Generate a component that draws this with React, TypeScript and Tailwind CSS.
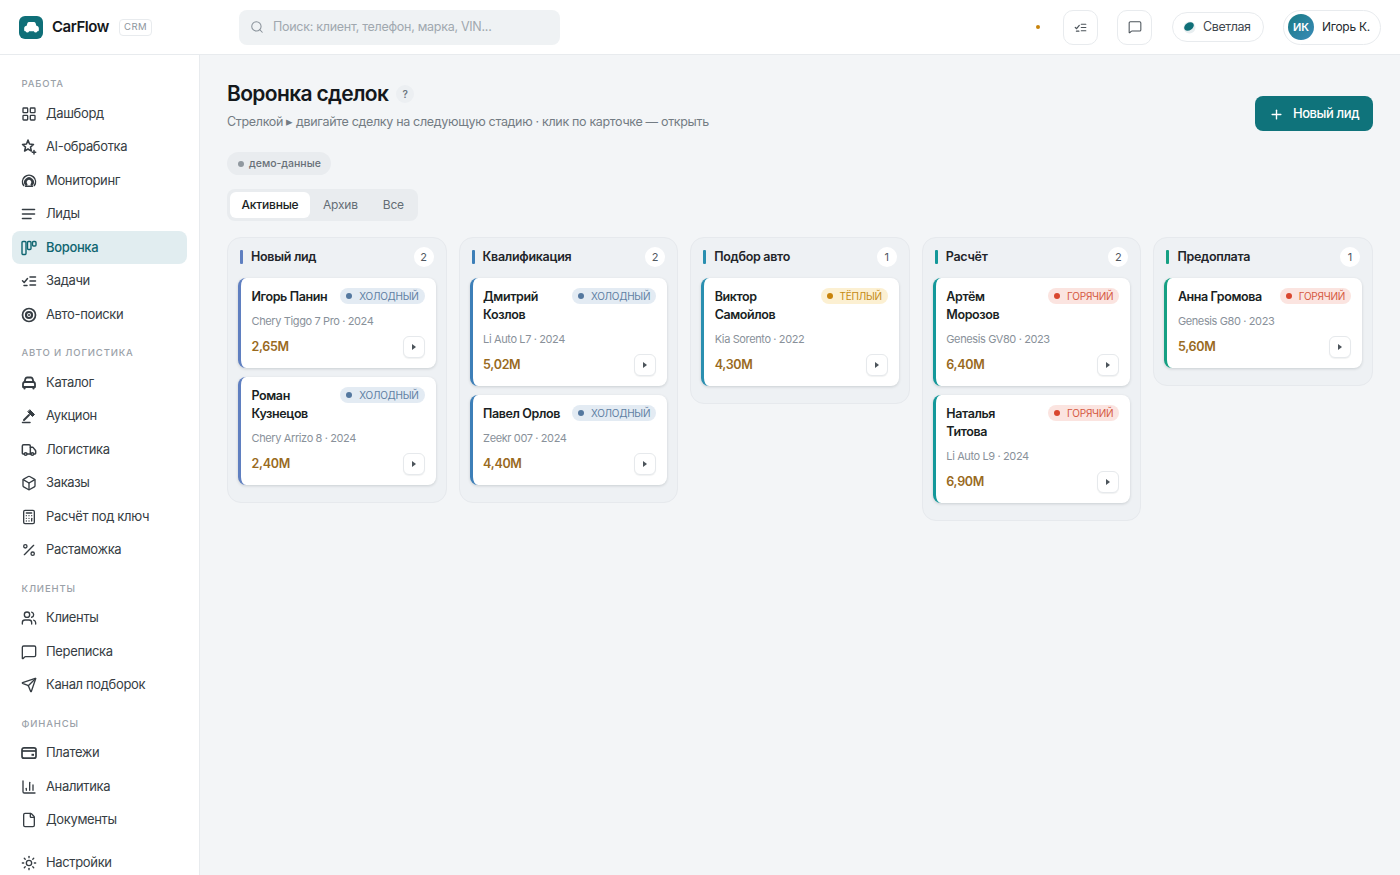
import {
  Box, Calculator, ChartColumn, File, MessageSquare, Percent,
  Plus, Search, Send, Sun, Truck, Users, LayoutGrid,
} from 'lucide-react';
import type { ReactNode } from 'react';

const FONT = 'Inter, "Noto Sans", sans-serif';

const iconProps = { size: 16, strokeWidth: 2 };

function SparkStar() {
  return (
    <svg width="16" height="16" viewBox="0 0 16 16" fill="none" stroke="currentColor" strokeWidth="1.5" strokeLinejoin="round" strokeLinecap="round">
      <path d="M7 1 8.500 5l4 .4-3 2.700.900 4-3.400-2.100L3.600 12l.9-3.900-3-2.700 4-.4z" />
      <path d="M13 11.500v3.500M11.300 13.200h3.400" />
    </svg>
  );
}

function Gauge() {
  return (
    <svg width="16" height="16" viewBox="0 0 16 16" fill="none" stroke="currentColor" strokeWidth="1.5" strokeLinecap="round">
      <path d="M2.700 12.500a6.500 6.500 0 1 1 10.600 0" />
      <path d="M5.200 11.500a3.600 3.600 0 1 1 5.600 0" strokeWidth="2.600" />
      <path d="M4.500 13.200h7" />
    </svg>
  );
}

function Lines() {
  return (
    <svg width="16" height="16" viewBox="0 0 16 16" fill="none" stroke="currentColor" strokeWidth="1.600" strokeLinecap="round">
      <path d="M1.500 3.500h12M1.500 8h12M1.500 12.500h8.500" />
    </svg>
  );
}

function Kanban() {
  return (
    <svg width="16" height="16" viewBox="0 0 16 16" fill="none" stroke="currentColor" strokeWidth="1.400" strokeLinejoin="round">
      <rect x="1" y="1.500" width="4" height="13" rx="1" />
      <rect x="6.500" y="1.500" width="3.500" height="8" rx="1" />
      <rect x="11.500" y="1.500" width="3.500" height="4.500" rx="1" />
    </svg>
  );
}

function TaskList({ size = 16 }: { size?: number }) {
  return (
    <svg width={size} height={size} viewBox="0 0 16 16" fill="none" stroke="currentColor" strokeWidth="1.500" strokeLinecap="round" strokeLinejoin="round">
      <path d="M1.500 7.800 3.200 9.500 6.500 5.500" />
      <path d="M9 4h5.500M9 8h5.500M9 12h5.500" />
      <path d="M3 12.500h3" />
    </svg>
  );
}

function Target() {
  return (
    <svg width="16" height="16" viewBox="0 0 16 16" fill="none" stroke="currentColor">
      <circle cx="8" cy="8" r="6.500" strokeWidth="1.700" />
      <circle cx="8" cy="8" r="3" strokeWidth="2.200" />
      <circle cx="8" cy="8" r="1" fill="currentColor" stroke="none" />
    </svg>
  );
}

function CarIcon() {
  return (
    <svg width="16" height="16" viewBox="0 0 16 16" fill="none" stroke="currentColor" strokeWidth="1.800" strokeLinejoin="round" strokeLinecap="round">
      <path d="M3.500 7 4.500 3.600C4.800 2.800 5.400 2.500 6 2.500h4c.6 0 1.200.3 1.500 1.100L12.500 7" />
      <path d="M2 9c0-1.300.8-2 2-2h8c1.200 0 2 .7 2 2v3H2z" />
      <path d="M3.500 12v1.500M12.500 12v1.500" strokeWidth="2.200" />
    </svg>
  );
}

function GavelIcon() {
  return (
    <svg width="16" height="16" viewBox="0 0 16 16" fill="currentColor" stroke="currentColor" strokeLinecap="round">
      <path d="m9 2 4.500 4.500-2 2L7 4z" strokeWidth="1" strokeLinejoin="round" />
      <path d="M8 7 3 12" strokeWidth="2" fill="none" />
      <path d="M1.500 14.500h7.500" strokeWidth="1.500" fill="none" />
    </svg>
  );
}

function WalletIcon() {
  return (
    <svg width="16" height="16" viewBox="0 0 16 16" fill="none" stroke="currentColor" strokeWidth="1.700" strokeLinejoin="round">
      <rect x="1" y="2.800" width="14" height="10.400" rx="2" />
      <path d="M1 6h14" />
      <path d="M10.500 9.800H13" strokeWidth="2" />
    </svg>
  );
}

type NavItem = { label: string; icon: ReactNode; active?: boolean };

const NAV: { title: string; items: NavItem[] }[] = [
  {
    title: 'Работа',
    items: [
      { label: 'Дашборд', icon: <LayoutGrid {...iconProps} /> },
      { label: 'AI-обработка', icon: <SparkStar /> },
      { label: 'Мониторинг', icon: <Gauge /> },
      { label: 'Лиды', icon: <Lines /> },
      { label: 'Воронка', icon: <Kanban />, active: true },
      { label: 'Задачи', icon: <TaskList /> },
      { label: 'Авто-поиски', icon: <Target /> },
    ],
  },
  {
    title: 'Авто и логистика',
    items: [
      { label: 'Каталог', icon: <CarIcon /> },
      { label: 'Аукцион', icon: <GavelIcon /> },
      { label: 'Логистика', icon: <Truck size={16} strokeWidth={2.2} /> },
      { label: 'Заказы', icon: <Box {...iconProps} /> },
      { label: 'Расчёт под ключ', icon: <Calculator {...iconProps} /> },
      { label: 'Растаможка', icon: <Percent {...iconProps} /> },
    ],
  },
  {
    title: 'Клиенты',
    items: [
      { label: 'Клиенты', icon: <Users {...iconProps} /> },
      { label: 'Переписка', icon: <MessageSquare {...iconProps} /> },
      { label: 'Канал подборок', icon: <Send {...iconProps} /> },
    ],
  },
  {
    title: 'Финансы',
    items: [
      { label: 'Платежи', icon: <WalletIcon /> },
      { label: 'Аналитика', icon: <ChartColumn {...iconProps} /> },
      { label: 'Документы', icon: <File {...iconProps} /> },
    ],
  },
];

const BADGES = {
  cold: { label: 'холодный', cls: 'bg-[#e3ebf3] text-[#5f7fa3]', dot: 'bg-[#54789f]' },
  warm: { label: 'тёплый', cls: 'bg-[#fcf0d2] text-[#c48a12]', dot: 'bg-[#c8830b]' },
  hot: { label: 'горячий', cls: 'bg-[#fbe4e0] text-[#d5583f]', dot: 'bg-[#d9472f]' },
};

type Deal = { name: string; car: string; price: string; temp: keyof typeof BADGES };

const COLUMNS: { title: string; bar: string; edge: string; deals: Deal[] }[] = [
  {
    title: 'Новый лид',
    bar: 'bg-[#5f7fc0]',
    edge: 'border-l-[#5f7fc0]',
    deals: [
      { name: 'Игорь Панин', car: 'Chery Tiggo 7 Pro · 2024', price: '2,65М', temp: 'cold' },
      { name: 'Роман Кузнецов', car: 'Chery Arrizo 8 · 2024', price: '2,40М', temp: 'cold' },
    ],
  },
  {
    title: 'Квалификация',
    bar: 'bg-[#3d7fb8]',
    edge: 'border-l-[#3d7fb8]',
    deals: [
      { name: 'Дмитрий Козлов', car: 'Li Auto L7 · 2024', price: '5,02М', temp: 'cold' },
      { name: 'Павел Орлов', car: 'Zeekr 007 · 2024', price: '4,40М', temp: 'cold' },
    ],
  },
  {
    title: 'Подбор авто',
    bar: 'bg-[#2a8fb0]',
    edge: 'border-l-[#2a8fb0]',
    deals: [{ name: 'Виктор Самойлов', car: 'Kia Sorento · 2022', price: '4,30М', temp: 'warm' }],
  },
  {
    title: 'Расчёт',
    bar: 'bg-[#14989a]',
    edge: 'border-l-[#14989a]',
    deals: [
      { name: 'Артём Морозов', car: 'Genesis GV80 · 2023', price: '6,40М', temp: 'hot' },
      { name: 'Наталья Титова', car: 'Li Auto L9 · 2024', price: '6,90М', temp: 'hot' },
    ],
  },
  {
    title: 'Предоплата',
    bar: 'bg-[#16a083]',
    edge: 'border-l-[#16a083]',
    deals: [{ name: 'Анна Громова', car: 'Genesis G80 · 2023', price: '5,60М', temp: 'hot' }],
  },
];

function Header() {
  return (
    <header className="h-[55px] shrink-0 bg-white border-b border-[#e8ebee] flex items-center pl-[19px] pr-[19px]">
      <div className="w-[24px] h-[23px] rounded-[6px] bg-[#0f6f78] flex items-center justify-center text-white">
        <svg width="15" height="11" viewBox="0 0 16 12" fill="currentColor">
          <path d="M3.600 1.200C3.900.5 4.500 0 5.300 0h5.400c.8 0 1.400.5 1.700 1.200L13.300 4c1.500.3 2.700 1.100 2.700 2.700V9c0 .6-.4 1-1 1h-.6a2 2 0 0 1-3.800 0H5.400a2 2 0 0 1-3.800 0H1c-.6 0-1-.4-1-1V6.700C0 5.100 1.200 4.300 2.700 4z" />
        </svg>
      </div>
      <span className="ml-[9px] w-[56px] pt-[1px] text-[15px] font-semibold tracking-[-0.45px] text-[#14181c]">CarFlow</span>
      <span className="ml-[11px] h-[17px] w-[33px] rounded-[4px] border border-[#e8ebee] text-[9.5px] tracking-[0.4px] text-[#8d959c] flex items-center justify-center">CRM</span>
      <div className="ml-[87px] w-[321px] h-[35px] rounded-[8px] bg-[#eff2f4] flex items-center pl-[11px] text-[#8a939b]">
        <Search size={14} strokeWidth={1.8} />
        <span className="ml-[9px] pt-[1px] text-[12.5px] tracking-[-0.28px] text-[#a0a8af]">Поиск: клиент, телефон, марка, VIN...</span>
      </div>
      <div className="ml-auto flex items-center">
        <span className="w-[4px] h-[4px] rounded-full bg-[#c8830b]" />
        <button className="ml-[23px] w-[35px] h-[35px] rounded-[10px] border border-[#e8ebee] flex items-center justify-center text-[#4b535a]">
          <TaskList size={13} />
        </button>
        <button className="ml-[19px] w-[35px] h-[35px] rounded-[10px] border border-[#e8ebee] flex items-center justify-center text-[#4b535a]">
          <MessageSquare size={14} strokeWidth={1.8} />
        </button>
        <button className="ml-[20px] w-[92px] h-[30px] rounded-full border border-[#e8ebee] flex items-center pl-[10px] text-[12.5px] tracking-[-0.4px] text-[#3f474e]">
          <svg width="13" height="13" viewBox="0 0 13 13">
            <circle cx="6.500" cy="6.500" r="6" fill="#e8eef0" />
            <ellipse cx="6" cy="5.500" rx="5.200" ry="3.800" fill="#0f6f78" transform="rotate(-35 6 5.500)" />
          </svg>
          <span className="ml-[7px] pt-[1px]">Светлая</span>
        </button>
        <button className="ml-[19px] w-[98px] h-[35px] rounded-full border border-[#e8ebee] flex items-center pl-[4px] text-[12px] tracking-[-0.3px] text-[#23292e]">
          <span className="w-[26px] h-[26px] rounded-full bg-gradient-to-br from-[#167a85] to-[#3a8bb8] text-white text-[11px] font-semibold tracking-normal flex items-center justify-center">ИК</span>
          <span className="ml-[8px]">Игорь К.</span>
        </button>
      </div>
    </header>
  );
}

function Sidebar() {
  return (
    <aside className="w-[200px] shrink-0 bg-white border-r border-[#e8ebee] px-[12px] pt-[20.5px] overflow-hidden flex flex-col">
      {NAV.map((group, i) => (
        <div key={group.title} className={i > 0 ? 'mt-[13.5px]' : ''}>
          <div className="h-[18px] pl-[9.5px] text-[9.5px] font-medium uppercase tracking-[0.85px] text-[#9aa1a8] flex items-center">{group.title}</div>
          <div className="mt-[3.5px] flex flex-col gap-[0.5px]">
            {group.items.map(item => (
              <div
                key={item.label}
                className={`h-[33px] rounded-[8px] pl-[9px] flex items-center gap-[9px] text-[13px] tracking-[-0.35px] ${
                  item.active ? 'bg-[#e1edf0] text-[#0f6570] font-medium' : 'text-[#363d43]'
                }`}
              >
                <span className="w-[16px] h-[16px] shrink-0 flex items-center justify-center">{item.icon}</span>
                {item.label}
              </div>
            ))}
          </div>
        </div>
      ))}
      <div className="mt-[13.5px] h-[33px] pl-[9px] flex items-center gap-[9px] text-[13px] tracking-[-0.35px] text-[#363d43]">
        <Sun {...iconProps} />
        Настройки
      </div>
    </aside>
  );
}

function DealCard({ deal, edge }: { deal: Deal; edge: string }) {
  const badge = BADGES[deal.temp];
  return (
    <div className={`bg-white rounded-[8px] border-l-[3px] ${edge} pl-[10.5px] pr-[11px] pt-[10px] pb-[10px] shadow-[0_1px_3px_rgba(20,30,40,0.16)]`}>
      <div className="flex items-start justify-between gap-[8px]">
        <span className="max-w-[90px] text-[12.5px] leading-[18px] font-semibold tracking-[-0.4px] text-[#1a1f24]">{deal.name}</span>
        <span className={`shrink-0 h-[16px] px-[6px] rounded-full flex items-center gap-[7px] text-[10px] uppercase tracking-[-0.25px] ${badge.cls}`}>
          <span className={`w-[6px] h-[6px] rounded-full ${badge.dot}`} />
          {badge.label}
        </span>
      </div>
      <div className="mt-[7px] text-[11px] leading-[16px] tracking-[-0.38px] text-[#89919a]">{deal.car}</div>
      <div className="mt-[7px] flex items-end justify-between">
        <span className="mb-[2px] text-[12.5px] leading-[18px] font-semibold tracking-[-0.3px] text-[#996a1e]">{deal.price}</span>
        <button className="w-[22px] h-[22px] rounded-[6px] bg-white border border-[#e6e9ec] shadow-[0_1px_1px_rgba(20,30,40,0.06)] flex items-center justify-center">
          <span className="w-0 h-0 border-y-[3.5px] border-y-transparent border-l-[4px] border-l-[#4b535a]" />
        </button>
      </div>
    </div>
  );
}

export default function App() {
  return (
    <div className="w-[1400px] h-[875px] overflow-hidden flex flex-col bg-[#f3f5f7]" style={{ fontFamily: FONT }}>
      <Header />
      <div className="flex-1 flex min-h-0">
        <Sidebar />
        <main className="flex-1 pl-[27px] pr-[27px] pt-[24px]">
          <div className="flex items-start justify-between">
            <div>
              <div className="flex items-center gap-[8px]">
                <h1 className="text-[21px] leading-[30px] font-semibold tracking-[-0.65px] text-[#14181c]">Воронка сделок</h1>
                <span className="w-[18px] h-[18px] rounded-full bg-[#eceff2] text-[10px] font-semibold text-[#6b747c] flex items-center justify-center">?</span>
              </div>
              <p className="mt-[4px] text-[12.5px] leading-[18px] tracking-[-0.33px] text-[#737c84]">Стрелкой ▸ двигайте сделку на следующую стадию · клик по карточке — открыть</p>
            </div>
            <button className="mt-[17px] w-[118px] h-[35px] pt-[1px] rounded-[8px] bg-[#0f737b] text-white text-[13px] font-medium tracking-[-0.4px] flex items-center justify-center gap-[9px]">
              <Plus size={15} strokeWidth={2.2} />
              Новый лид
            </button>
          </div>
          <div className="mt-[21px] w-[104px] h-[23px] rounded-full bg-[#e9ecef] pl-[11px] flex items-center gap-[5px] text-[10.5px] font-medium text-[#687078]">
            <span className="w-[6px] h-[6px] rounded-full bg-[#90989f]" />
            демо-данные
          </div>
          <div className="mt-[14px] w-[191px] h-[32px] rounded-[8px] bg-[#e9ecef] p-[3px] flex items-center text-[12px] tracking-[-0.2px] text-[#646d75]">
            <span className="w-[80px] h-[26px] rounded-[6px] bg-white font-medium text-[#1a1f24] flex items-center justify-center">Активные</span>
            <span className="ml-[13px]">Архив</span>
            <span className="ml-[25px]">Все</span>
          </div>
          <div className="mt-[16px] grid grid-cols-5 gap-[12px] items-start">
            {COLUMNS.map(col => (
              <section key={col.title} className="bg-[#eef1f4] border border-[#e6e9ed] rounded-[14px] pt-[9px] pl-[10px] pr-[10px] pb-[17px]">
                <div className="h-[20px] flex items-center">
                  <span className={`ml-[2px] w-[3px] h-[14px] rounded-[1px] ${col.bar}`} />
                  <span className="ml-[8px] text-[12.5px] font-semibold tracking-[-0.3px] text-[#1f252a]">{col.title}</span>
                  <span className="ml-auto mr-[2px] w-[20px] h-[20px] rounded-full bg-white text-[11px] text-[#50585f] flex items-center justify-center">{col.deals.length}</span>
                </div>
                <div className="mt-[11px] flex flex-col gap-[9px]">
                  {col.deals.map(deal => (
                    <DealCard key={deal.name} deal={deal} edge={col.edge} />
                  ))}
                </div>
              </section>
            ))}
          </div>
        </main>
      </div>
    </div>
  );
}
